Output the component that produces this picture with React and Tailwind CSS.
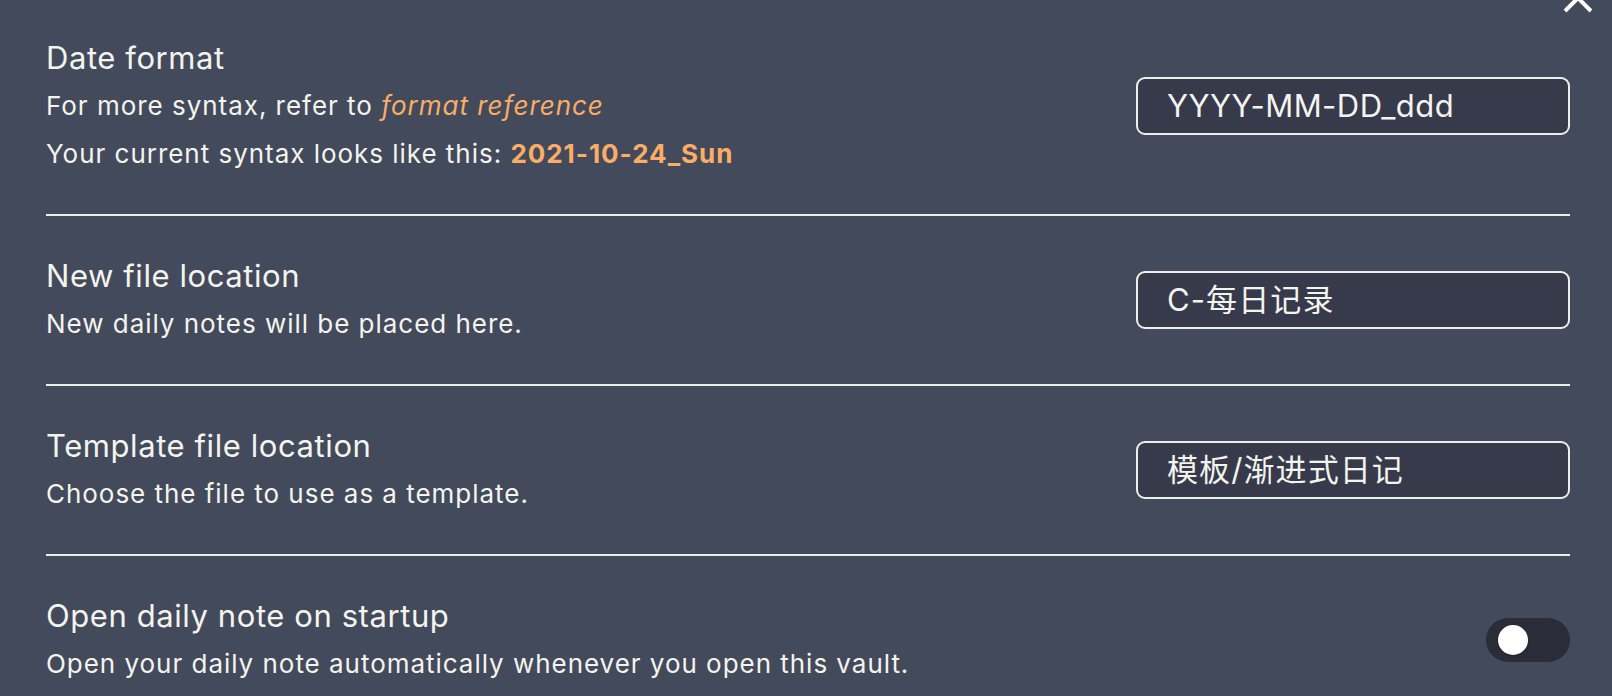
import React from 'react';

const rows = [
  {
    name: 'Date format',
    desc: [
      <>For more syntax, refer to <a className="italic text-[#f9ad66]">format reference</a></>,
      <>Your current syntax looks like this: <b className="font-bold text-[#f9ad66]">2021-10-24_Sun</b></>,
    ],
    control: { type: 'text', value: 'YYYY-MM-DD_ddd', latin: true },
  },
  {
    name: 'New file location',
    desc: ['New daily notes will be placed here.'],
    control: { type: 'text', value: 'C-每日记录' },
  },
  {
    name: 'Template file location',
    desc: ['Choose the file to use as a template.'],
    control: { type: 'text', value: '模板/渐进式日记' },
  },
  {
    name: 'Open daily note on startup',
    desc: ['Open your daily note automatically whenever you open this vault.'],
    control: { type: 'toggle', value: false },
  },
];

function Toggle({ on }) {
  return (
    <div className="flex h-[44px] w-[84px] items-center rounded-full bg-[#2a2c38] pl-[12px]">
      <div className="h-[30px] w-[30px] rounded-full bg-white shadow-[0_1px_2px_rgba(0,0,0,0.3)]" />
    </div>
  );
}

function SettingRow({ row, last }) {
  const c = row.control;
  return (
    <div className={`flex items-center justify-between py-[36px] ${last ? '' : 'border-b-2 border-[#ececec]'}`}>
      <div className="flex flex-col">
        <div className="text-[31px] leading-[48px] tracking-[0.58px] text-[#f4f4ee]">{row.name}</div>
        {row.desc.map((d, i) => (
          <div key={i} className="text-[26px] leading-[48px] tracking-[0.97px] text-[#f4f4ee]">{d}</div>
        ))}
      </div>
      {c.type === 'text' ? (
        <div
          className={`flex h-[58px] w-[434px] items-center rounded-[9px] border-2 border-[#efefea] bg-[#363a4a] pl-[29px] text-[31px] text-[#f4f4ee] ${c.latin ? 'tracking-[0.45px]' : 'tracking-[1.1px]'}`}
        >
          {c.value}
        </div>
      ) : (
        <Toggle on={c.value} />
      )}
    </div>
  );
}

export default function App() {
  return (
    <div
      className="relative h-[696px] w-full overflow-hidden bg-[#434a5b] pl-[46px] pr-[42px]"
      style={{ fontFamily: 'Inter, "Noto Sans CJK SC", sans-serif' }}
    >
      {/* close button, cut off by the top edge */}
      <button className="absolute right-[19px] top-[-17px] h-[30px] w-[30px] text-white" aria-label="Close">
        <svg viewBox="0 0 30 30" className="h-[30px] w-[30px]" fill="none" stroke="currentColor" strokeWidth="4">
          <path d="M2 2L28 28M28 2L2 28" />
        </svg>
      </button>
      <div className="-mt-[2px]">
        {rows.map((row, i) => (
          <SettingRow key={row.name} row={row} last={i === rows.length - 1} />
        ))}
      </div>
    </div>
  );
}
